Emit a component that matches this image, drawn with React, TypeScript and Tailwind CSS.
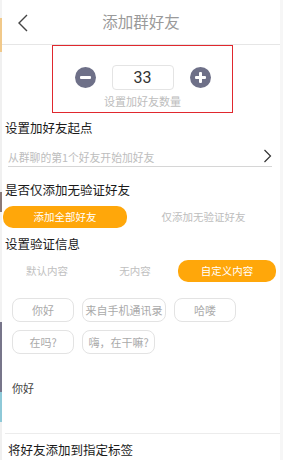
import React from "react";

const chips = [
  [
    { t: "你好", w: "w-[62px]" },
    { t: "来自手机通讯录", w: "w-[84px]" },
    { t: "哈喽", w: "w-[62px]" },
  ],
  [
    { t: "在吗?", w: "w-[62px]" },
    { t: "嗨，在干嘛?", w: "w-[73px]" },
  ],
];

function Circle({ plus }: { plus?: boolean }) {
  return (
    <svg width="21" height="21" viewBox="0 0 21 21">
      <circle cx="10.5" cy="10.5" r="10.5" fill="#6e7088" />
      <rect x="5" y="9" width="11" height="3" rx="1" fill="#fff" />
      {plus && <rect x="9" y="5" width="3" height="11" rx="1" fill="#fff" />}
    </svg>
  );
}

export default function App() {
  return (
    <div
      className="relative flex h-[460px] w-[283px] overflow-hidden bg-white text-[#1a1a1a]"
      style={{ fontFamily: '"Noto Sans CJK SC", "Noto Sans", sans-serif' }}
    >
      {/* edge of the screen behind */}
      <div className="flex w-[2px] shrink-0 flex-col">
        <div className="h-[18px] bg-[#f3f3f3]" />
        <div className="h-[34px] bg-[#f1c98a]" />
        <div className="h-[140px] bg-[#f0f0f0]" />
        <div className="h-[20px] bg-[#8a7a78]" />
        <div className="h-[110px] bg-[#f2f2f2]" />
        <div className="h-[70px] bg-[#77758a]" />
        <div className="h-[30px] bg-[#8ec9d8]" />
        <div className="flex-1 bg-[#f0f0f0]" />
      </div>

      <div className="min-w-0 flex-1">
        {/* header */}
        <div className="relative flex h-[45px] items-center justify-center border-b border-[#e6e6e6]">
          <svg className="absolute left-[15px] top-[14px]" width="12" height="18" viewBox="0 0 12 18">
            <path d="M10 1 L2 9 L10 17" fill="none" stroke="#444" strokeWidth="1.4" />
          </svg>
          <span className="text-[15.5px] text-[#9a9a9a]">添加群好友</span>
        </div>

        {/* count box */}
        <div className="ml-[50px] flex h-[68px] w-[181px] flex-col items-center border-[1.5px] border-[#e0282e] pt-[19px]">
          <div className="flex items-center gap-[16px]">
            <Circle />
            <div
              className="flex h-[25px] w-[62px] items-center justify-center rounded-[4px] border border-[#e4e4e4] text-[16px] text-[#333]"
              style={{ fontFamily: 'Roboto, "Liberation Sans", sans-serif' }}
            >
              33
            </div>
            <Circle plus />
          </div>
          <div className="mt-[3px] text-[11px] leading-[16px] text-[#bdbdbd]">设置加好友数量</div>
        </div>

        <div className="mt-[5px] pl-[3px] text-[12.5px] leading-[20px]">设置加好友起点</div>

        <div className="mr-[8px] mt-[10px] ml-[6px] flex h-[19px] items-center justify-between border-b border-[#d6d6d6]">
          <span className="text-[10.8px] leading-[18px] text-[#bdbdbd]">从群聊的第1个好友开始加好友</span>
          <svg width="9" height="14" viewBox="0 0 9 14" className="mb-[2px]">
            <path d="M1.5 1 L7.5 7 L1.5 13" fill="none" stroke="#333" strokeWidth="1.2" />
          </svg>
        </div>

        <div className="mt-[13px] pl-[3px] text-[12.5px] leading-[20px]">是否仅添加无验证好友</div>

        <div className="mt-[6px] flex items-center">
          <div className="ml-[1px] flex h-[22px] w-[124px] items-center justify-center rounded-[10px] bg-[#ffa70a] text-[10.5px] text-white">
            添加全部好友
          </div>
          <div className="flex-1 text-center text-[10.5px] text-[#bdbdbd]">仅添加无验证好友</div>
        </div>

        <div className="mt-[6px] pl-[3px] text-[12.5px] leading-[20px]">设置验证信息</div>

        <div className="mt-[6px] flex items-center pr-[4px]">
          <div className="w-[90px] text-center text-[10.5px] text-[#c0c0c0]">默认内容</div>
          <div className="w-[86px] text-center text-[10.5px] text-[#c0c0c0]">无内容</div>
          <div className="flex h-[22px] flex-1 items-center justify-center rounded-[10px] bg-[#ffa70a] text-[10.5px] text-white">
            自定义内容
          </div>
        </div>

        <div className="mt-[16px] flex flex-col gap-[8px] pl-[10px]">
          {chips.map((row, i) => (
            <div key={i} className="flex gap-[8px]">
              {row.map((c) => (
                <div
                  key={c.t}
                  className={`flex h-[24px] items-center justify-center whitespace-nowrap rounded-[8px] border border-[#e3e3e3] text-[11px] text-[#aaaaaa] ${c.w}`}
                >
                  {c.t}
                </div>
              ))}
            </div>
          ))}
        </div>

        <div className="mt-[25px] h-[54px] pl-[10px] text-[11px] leading-[18px] text-[#444]">你好</div>

        <div className="ml-[3px] border-t border-[#ececec] pt-[6px] pl-[3px] text-[12.5px] leading-[20px]">
          将好友添加到指定标签
        </div>
      </div>

      <div className="w-[3px] shrink-0 bg-[#f6f6f6]" />
    </div>
  );
}
